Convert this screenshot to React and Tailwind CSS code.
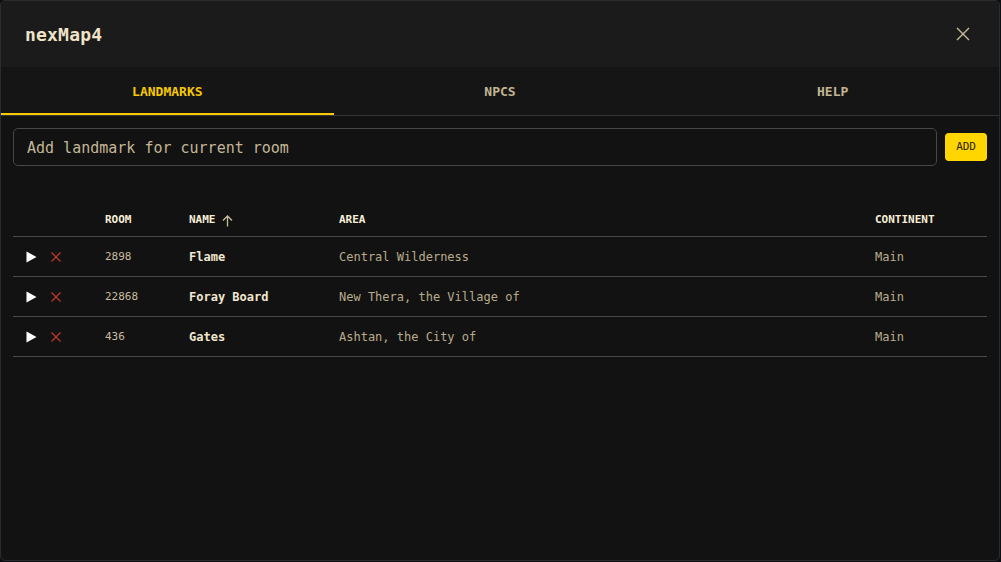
import React, { useState } from 'react';

const rows = [
    { room: '2898', name: 'Flame', area: 'Central Wilderness', continent: 'Main' },
    { room: '22868', name: 'Foray Board', area: 'New Thera, the Village of', continent: 'Main' },
    { room: '436', name: 'Gates', area: 'Ashtan, the City of', continent: 'Main' },
];

const tabs = ['LANDMARKS', 'NPCS', 'HELP'];

const cols = 'grid grid-cols-[92px_84px_150px_536px_1fr]';

export default function App() {
    const [active, setActive] = useState(0);
    const [text, setText] = useState('');

    return (
        <div className="w-[1001px] h-[562px] bg-[#0c0e13] font-['DejaVu_Sans_Mono',monospace]">
            <div className="w-[1000px] h-[561px] bg-[#121212] border border-[#2c2c2c] rounded-[5px] overflow-hidden flex flex-col">
                {/* Title bar */}
                <div className="h-[66px] bg-[#1b1b1b] flex items-center justify-between pl-[24px] pr-[28px] shrink-0">
                    <h1 className="text-[18px] font-bold text-[#efe3c8] tracking-[0.2px]">nexMap4</h1>
                    <button className="text-[#c9bd9f]">
                        <svg width="16" height="16" viewBox="0 0 16 16" fill="none" stroke="currentColor" strokeWidth="1.4">
                            <path d="M2 2L14 14M14 2L2 14" />
                        </svg>
                    </button>
                </div>

                {/* Tabs */}
                <div className="grid grid-cols-3 bg-[#151515] border-b border-[#333] shrink-0">
                    {tabs.map((t, i) => (
                        <button
                            key={t}
                            onClick={() => setActive(i)}
                            className={
                                'h-[48px] pt-[3px] text-[13px] font-bold border-b-2 ' +
                                (active === i ? 'text-[#f5c800] border-[#f5c800]' : 'text-[#c2b593] border-transparent')
                            }
                        >
                            {t}
                        </button>
                    ))}
                </div>

                {/* Add landmark */}
                <div className="flex items-center gap-[8px] pl-[12px] pr-[12px] pt-[12px]">
                    <input
                        value={text}
                        onChange={(e) => setText(e.target.value)}
                        placeholder="Add landmark for current room"
                        className="flex-1 h-[38px] bg-[#121212] border border-[#474747] rounded-[5px] px-[13px] pt-[2px] text-[15px] text-[#e6dabd] placeholder:text-[#c4b797] outline-none"
                    />
                    <button className="h-[28px] px-[11px] bg-[#ffd600] rounded-[4px] text-[11px] text-[#2a2200]">ADD</button>
                </div>

                {/* Table */}
                <div className="mx-[12px] mt-[37px]">
                    <div className={cols + ' h-[34px] items-center pt-[2px] border-b border-[#4a4a4a] text-[11px] font-bold text-[#f7eed8]'}>
                        <div />
                        <div>ROOM</div>
                        <div className="flex items-center gap-[6px]">
                            NAME
                            <svg width="11" height="12" viewBox="0 0 11 12" fill="none" stroke="#c9bd9f" strokeWidth="1.3">
                                <path d="M5.5 11.5V1M1 5.5L5.5 1L10 5.5" />
                            </svg>
                        </div>
                        <div>AREA</div>
                        <div>CONTINENT</div>
                    </div>
                    {rows.map((r) => (
                        <div key={r.room} className={cols + ' h-[40px] items-center pt-[1px] border-b border-[#4a4a4a]'}>
                            <div className="flex items-center gap-[14px] pl-[13px]">
                                <svg width="11" height="12" viewBox="0 0 11 12">
                                    <path d="M0.5 0.5L10.5 6L0.5 11.5Z" fill="#ffffff" />
                                </svg>
                                <svg width="10" height="10" viewBox="0 0 10 10" fill="none" stroke="#c0392b" strokeWidth="1.2">
                                    <path d="M0.5 0.5L9.5 9.5M9.5 0.5L0.5 9.5" />
                                </svg>
                            </div>
                            <div className="text-[11px] text-[#c9bd9f]">{r.room}</div>
                            <div className="text-[12px] font-bold text-[#f1e7cf]">{r.name}</div>
                            <div className="text-[12px] text-[#b9ac8d]">{r.area}</div>
                            <div className="text-[12px] text-[#b9ac8d]">{r.continent}</div>
                        </div>
                    ))}
                </div>
            </div>
        </div>
    );
}
